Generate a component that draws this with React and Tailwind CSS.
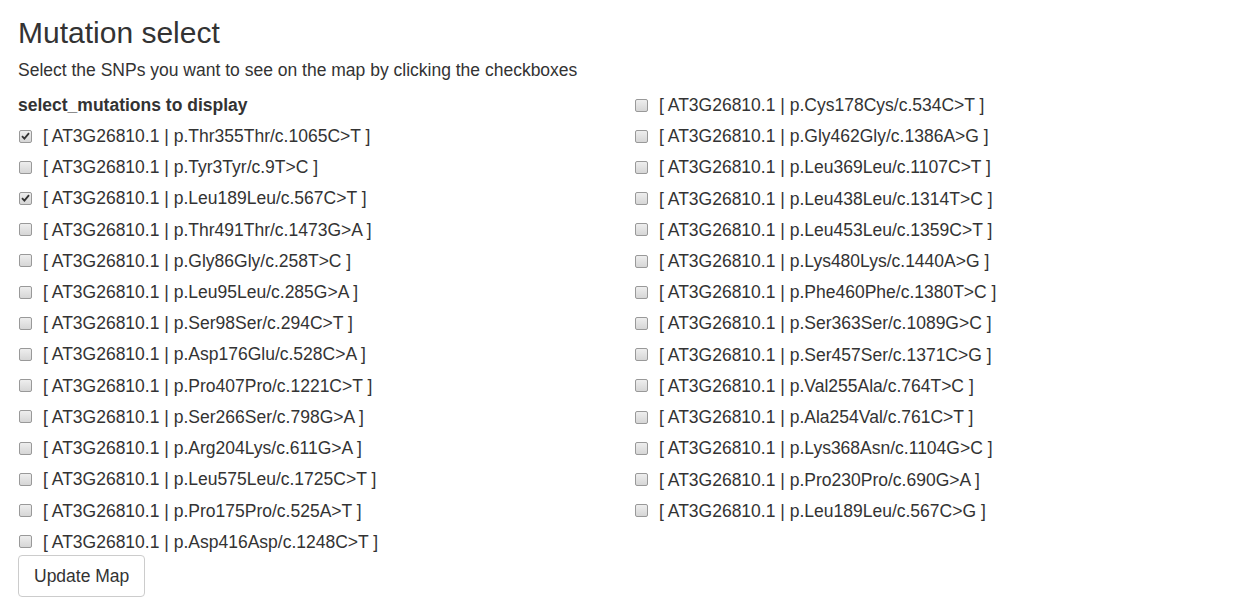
import React, { useState } from 'react';

const leftMutations = [
  'p.Thr355Thr/c.1065C>T',
  'p.Tyr3Tyr/c.9T>C',
  'p.Leu189Leu/c.567C>T',
  'p.Thr491Thr/c.1473G>A',
  'p.Gly86Gly/c.258T>C',
  'p.Leu95Leu/c.285G>A',
  'p.Ser98Ser/c.294C>T',
  'p.Asp176Glu/c.528C>A',
  'p.Pro407Pro/c.1221C>T',
  'p.Ser266Ser/c.798G>A',
  'p.Arg204Lys/c.611G>A',
  'p.Leu575Leu/c.1725C>T',
  'p.Pro175Pro/c.525A>T',
  'p.Asp416Asp/c.1248C>T',
];

const rightMutations = [
  'p.Cys178Cys/c.534C>T',
  'p.Gly462Gly/c.1386A>G',
  'p.Leu369Leu/c.1107C>T',
  'p.Leu438Leu/c.1314T>C',
  'p.Leu453Leu/c.1359C>T',
  'p.Lys480Lys/c.1440A>G',
  'p.Phe460Phe/c.1380T>C',
  'p.Ser363Ser/c.1089G>C',
  'p.Ser457Ser/c.1371C>G',
  'p.Val255Ala/c.764T>C',
  'p.Ala254Val/c.761C>T',
  'p.Lys368Asn/c.1104G>C',
  'p.Pro230Pro/c.690G>A',
  'p.Leu189Leu/c.567C>G',
];

const Checkbox = ({ checked, onChange, label }) => (
  <label className="flex items-center h-[31.23px] cursor-pointer select-none">
    <span
      onClick={onChange}
      className="w-[13px] h-[13px] ml-[1px] rounded-[2px] border border-[#999] bg-gradient-to-b from-[#eee] to-[#d6d6d6] flex items-center justify-center shrink-0"
    >
      {checked && (
        <svg width="9" height="8" viewBox="0 0 9 8">
          <path d="M1 4.2 L3.4 6.6 L8 1.2" fill="none" stroke="#333" strokeWidth="1.8" />
        </svg>
      )}
    </span>
    <span className="ml-[11px]">[ AT3G26810.1 | {label} ]</span>
  </label>
);

export default function App() {
  const [selected, setSelected] = useState({
    'L-p.Thr355Thr/c.1065C>T': true,
    'L-p.Leu189Leu/c.567C>T': true,
  });

  const toggle = (key) => setSelected((s) => ({ ...s, [key]: !s[key] }));

  return (
    <div className="min-h-screen bg-white text-[#333] font-['Liberation_Sans',Arial,sans-serif] pt-[16px] pl-[18px]">
      <h2 className="text-[30px] leading-[33px]">Mutation select</h2>
      <p className="text-[17.5px] leading-[22px] mt-[10px]">
        Select the SNPs you want to see on the map by clicking the checkboxes
      </p>

      <div className="flex mt-[8.4px] text-[17.5px]">
        <div className="w-[616px] flex flex-col">
          <div className="h-[31px] flex items-center font-bold">select_mutations to display</div>
          {leftMutations.map((m) => (
            <Checkbox
              key={m}
              label={m}
              checked={!!selected['L-' + m]}
              onChange={() => toggle('L-' + m)}
            />
          ))}
        </div>
        <div className="flex flex-col">
          {rightMutations.map((m) => (
            <Checkbox
              key={m}
              label={m}
              checked={!!selected['R-' + m]}
              onChange={() => toggle('R-' + m)}
            />
          ))}
        </div>
      </div>

      <button className="mt-[-2px] px-[15px] py-[9px] leading-[22px] text-[17.5px] border border-[#ccc] rounded-[4px] bg-white hover:bg-[#e6e6e6]">
        Update Map
      </button>
    </div>
  );
}
